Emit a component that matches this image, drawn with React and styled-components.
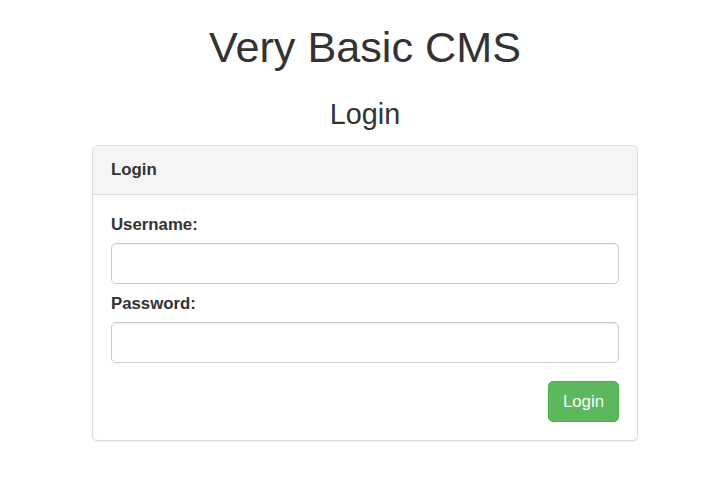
import React from "react";
import styled, { createGlobalStyle } from "styled-components";

const GlobalStyle = createGlobalStyle`
  html, body {
    margin: 0;
    padding: 0;
    background: #fff;
  }
  body {
    font-family: "Liberation Sans", Arial, Helvetica, sans-serif;
    font-size: 16.8px;
    line-height: 1.42857;
    color: #333;
  }
  * {
    box-sizing: border-box;
  }
`;

const Page = styled.main`
  display: flex;
  flex-direction: column;
  align-items: center;
  padding: 24px 0 24px 4px;
`;

const Title = styled.h1`
  margin: 0;
  font-size: 43.2px;
  font-weight: 500;
  line-height: 1.1;
`;

const Subtitle = styled.h3`
  margin: 27px 0 15px;
  font-size: 28.8px;
  font-weight: 500;
  line-height: 1.1;
`;

const Panel = styled.section`
  width: 546px;
  border: 1px solid #ddd;
  border-radius: 5px;
  background: #fff;
  box-shadow: 0 1px 1px rgba(0, 0, 0, 0.05);
`;

const PanelHeading = styled.header`
  padding: 12px 18px;
  background: #f5f5f5;
  border-bottom: 1px solid #ddd;
  border-radius: 4px 4px 0 0;
  font-weight: 700;
`;

const PanelBody = styled.form`
  display: flex;
  flex-direction: column;
  padding: 18px;
`;

const Label = styled.label`
  display: block;
  margin: ${(p) => (p.$first ? "0" : "8px")} 0 6px;
  font-weight: 700;
`;

const Input = styled.input`
  display: block;
  width: 100%;
  height: 41px;
  padding: 7px 14px;
  font: inherit;
  color: #555;
  background: #fff;
  border: 1px solid #ccc;
  border-radius: 5px;
  box-shadow: inset 0 1px 1px rgba(0, 0, 0, 0.075);
  outline: none;
`;

const Actions = styled.div`
  display: flex;
  justify-content: flex-end;
  margin-top: 18px;
`;

const Button = styled.button`
  height: 41px;
  padding: 7px 14px;
  font: inherit;
  color: #fff;
  background: #5cb85c;
  border: 1px solid #4cae4c;
  border-radius: 5px;
  cursor: pointer;
`;

const App = () => {
  return (
    <>
      <GlobalStyle />
      <Page>
        <Title>Very Basic CMS</Title>
        <Subtitle>Login</Subtitle>
        <Panel>
          <PanelHeading>Login</PanelHeading>
          <PanelBody onSubmit={(e) => e.preventDefault()}>
            <Label $first htmlFor="username">Username:</Label>
            <Input id="username" type="text" />
            <Label htmlFor="password">Password:</Label>
            <Input id="password" type="password" />
            <Actions>
              <Button type="submit">Login</Button>
            </Actions>
          </PanelBody>
        </Panel>
      </Page>
    </>
  );
};

export default App;
